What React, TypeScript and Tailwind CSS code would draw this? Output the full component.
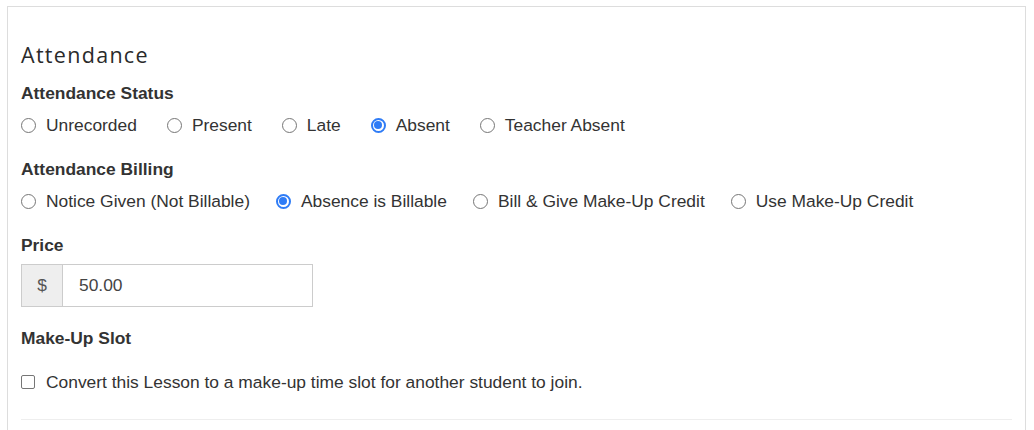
import React from "react";

const Radio = ({ label, checked, mr }: { label: string; checked?: boolean; mr: string }) => (
  <label className={`flex items-center h-[24px] ${mr}`}>
    {checked ? (
      <span className="w-[15px] h-[15px] rounded-full border-2 border-[#2f7cf6] flex items-center justify-center">
        <span className="w-[8px] h-[8px] rounded-full bg-[#2f7cf6]" />
      </span>
    ) : (
      <span className="w-[15px] h-[15px] rounded-full border border-[#767676]" />
    )}
    <span className="ml-[10px]">{label}</span>
  </label>
);

export default function App() {
  return (
    <div className="bg-white w-[1034px] h-[430px] overflow-hidden text-[#333] text-[17.4px]" style={{ fontFamily: '"Liberation Sans", Arial, sans-serif' }}>
      <div className="mt-[6px] ml-[7px] w-[1019px] h-[500px] border border-[#ddd] px-[13px] pt-[33px]">
        <h2 className="h-[30px] leading-[30px] text-[21.5px] text-[#2a2a2a] tracking-[1.3px]" style={{ fontFamily: '"Open Sans", sans-serif' }}>
          Attendance
        </h2>
        <div className="mt-[11px] h-[24px] leading-[24px] font-bold">Attendance Status</div>
        <div className="mt-[8px] flex">
          <Radio mr="mr-[30px]" label="Unrecorded" />
          <Radio mr="mr-[30px]" label="Present" />
          <Radio mr="mr-[30px]" label="Late" />
          <Radio mr="mr-[30px]" label="Absent" checked />
          <Radio mr="mr-[30px]" label="Teacher Absent" />
        </div>
        <div className="mt-[20px] h-[24px] leading-[24px] font-bold">Attendance Billing</div>
        <div className="mt-[8px] flex">
          <Radio mr="mr-[26px]" label="Notice Given (Not Billable)" />
          <Radio mr="mr-[26px]" label="Absence is Billable" checked />
          <Radio mr="mr-[26px]" label="Bill & Give Make-Up Credit" />
          <Radio mr="mr-[26px]" label="Use Make-Up Credit" />
        </div>
        <div className="mt-[20px] h-[24px] leading-[24px] font-bold">Price</div>
        <div className="mt-[7px] flex w-[292px] h-[43px] border border-[#ccc]">
          <div className="w-[41px] bg-[#eee] border-r border-[#ccc] flex items-center justify-center text-[#555]">$</div>
          <div className="flex-1 flex items-center pl-[16px] text-[#444]">50.00</div>
        </div>
        <div className="mt-[19px] h-[24px] leading-[24px] font-bold">Make-Up Slot</div>
        <label className="mt-[20px] flex items-center h-[24px]">
          <span className="w-[14px] h-[14px] rounded-[2px] border border-[#767676]" />
          <span className="ml-[11px]">Convert this Lesson to a make-up time slot for another student to join.</span>
        </label>
        <div className="mt-[25px] border-t border-[#eee]" />
      </div>
    </div>
  );
}
